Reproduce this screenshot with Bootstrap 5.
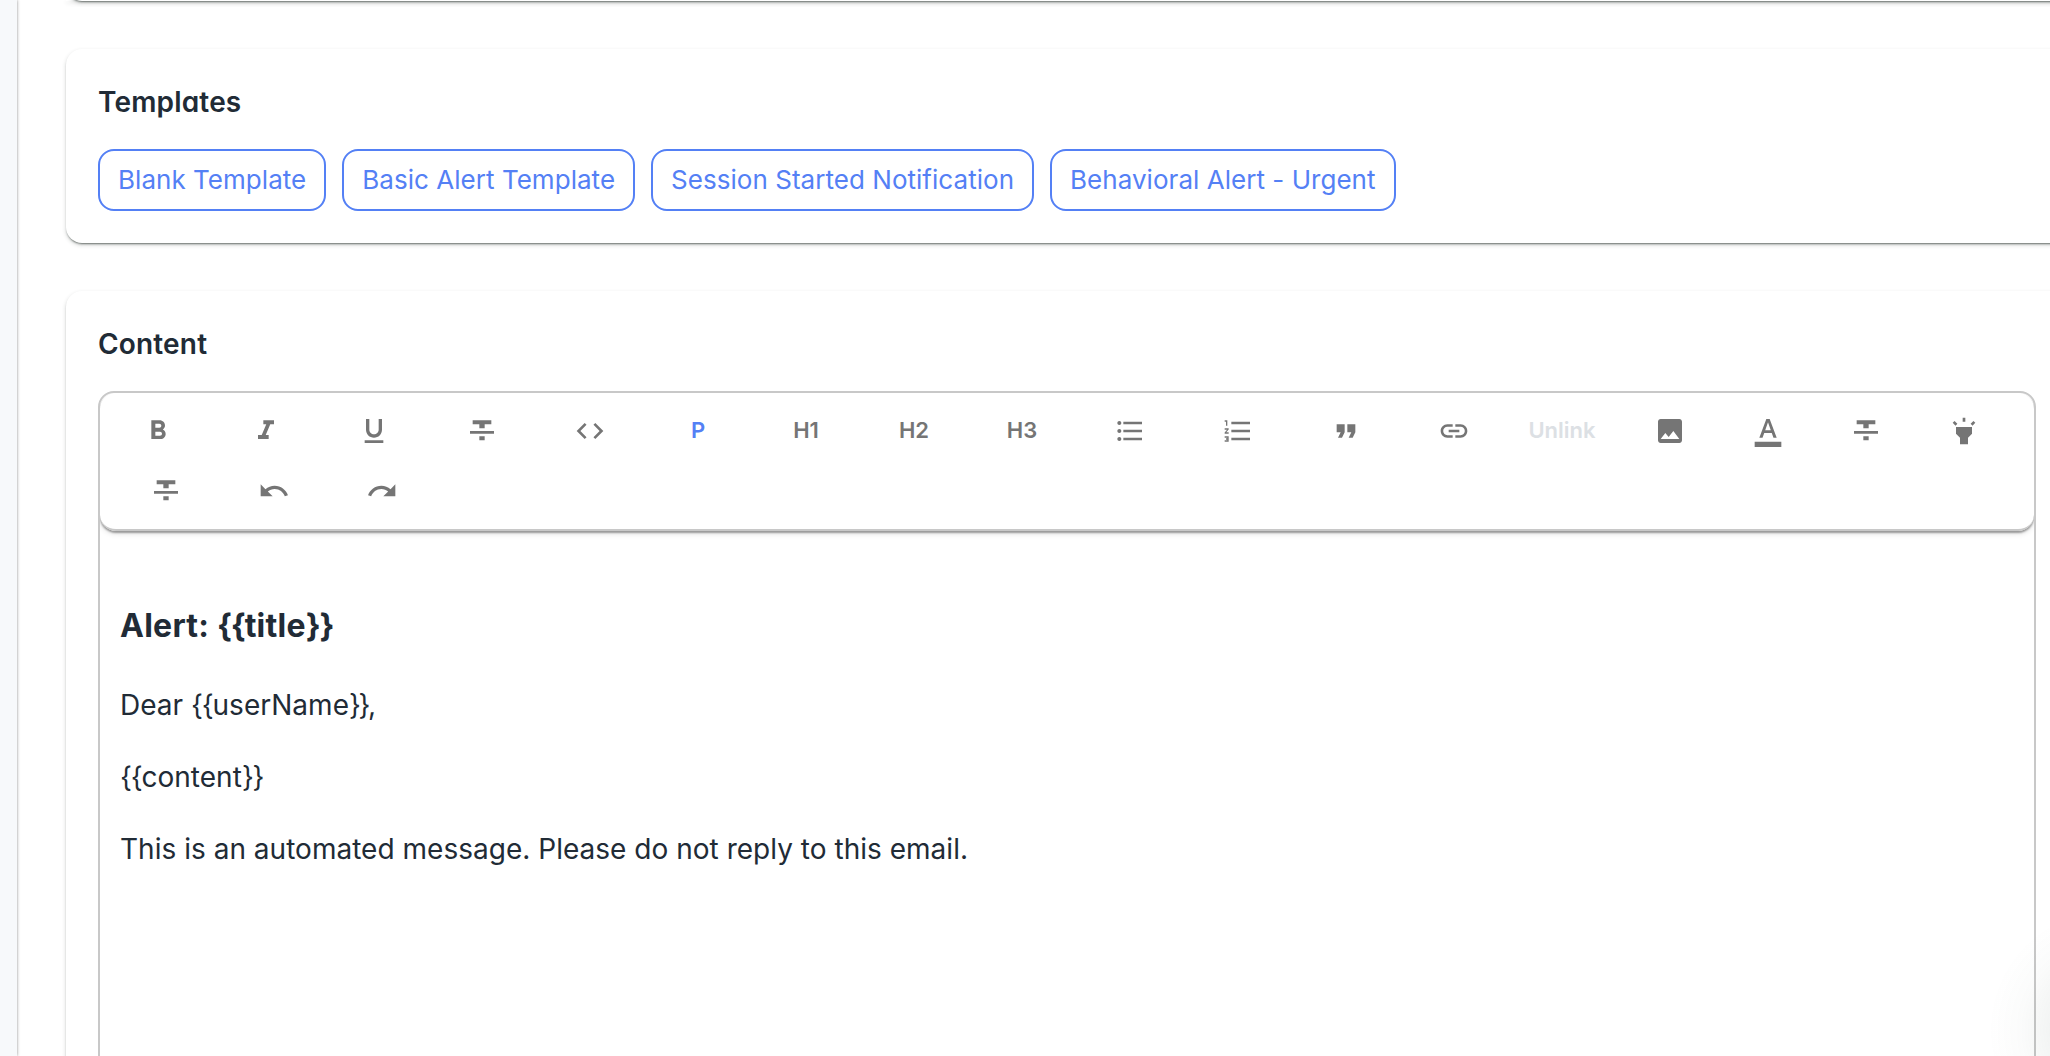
<!DOCTYPE html>
<html lang="en">
<head>
<meta charset="utf-8">
<title>Email template editor</title>
<link href="https://cdn.jsdelivr.net/npm/bootstrap@5.3.0/dist/css/bootstrap.min.css" rel="stylesheet">
<style>
html,body{height:100%;overflow:hidden}
body{font-family:Inter,"Liberation Sans",sans-serif;color:#212b36;background:#fff}
.side-rail{width:17px;background:#f7f9fb;flex:none;box-shadow:0 0 3px rgba(0,0,0,.45)}
.page-main{height:1056px;padding-left:49px;overflow:hidden;gap:48px}
.panel{width:2100px;border-radius:16px;background:#fff;padding:32px;flex:none;box-shadow:0 2px 2px -1px rgba(40,50,45,.62),0 2px 4px rgba(40,50,45,.2)}
.panel-prev{height:1px;padding:0}
.panel-prev::before{content:"";display:block;margin-top:-79px;height:80px;border-radius:16px;box-shadow:0 2px 2px -1px rgba(40,50,45,.62),0 2px 4px rgba(40,50,45,.2)}
.panel-title{font-size:28px;line-height:42px;font-weight:600;margin:0 0 26px;letter-spacing:.17px;font-feature-settings:"cv11"}
.tpl-btn{--bs-btn-color:#5480f5;--bs-btn-border-color:#5480f5;font-size:26px;line-height:40px;height:62px;padding:9px 18px;border-width:2px;border-radius:16px;letter-spacing:.035px}
.editor{width:1938px;height:900px;border:2px solid #c8c8c8;border-radius:16px;overflow:hidden}
.toolbar{height:138px;padding:7px 4px;border-bottom:2px solid #c8c8c8;border-radius:16px;box-shadow:0 2px 2px rgba(0,0,0,.34),0 2px 6px rgba(0,0,0,.14);color:#757575}
.tool{width:108px;height:60px;padding:0;border:0;background:none;color:inherit;font-size:22px;font-weight:600;flex:none}
.tool-slim{width:88px}
.tool-row-next{padding-left:8px}
.tool svg{width:32px;height:32px;fill:currentColor}
.tool-on{color:#5480f5}
.tool-off{color:#dce0e4}
.doc{padding:71px 20px 0;font-size:28px;line-height:42px;letter-spacing:.02px}
.doc h3{font-size:32px;line-height:48px;font-weight:700;margin:0 0 34px;letter-spacing:.25px}
.doc p{margin:0 0 30px}
.brace{letter-spacing:-1.2px}
.brace-tight{letter-spacing:-2.4px}
.corner-glow{position:fixed;right:0;bottom:0;width:80px;height:156px;pointer-events:none;background:radial-gradient(circle at 140px 130px,rgba(40,70,60,.16) 0,rgba(40,70,60,.055) 62px,rgba(40,70,60,.018) 90px,rgba(40,70,60,0) 122px)}
</style>
</head>
<body class="d-flex">
<svg class="d-none">
<symbol id="i-strike" viewBox="0 0 24 24"><path d="M10 19h4v-3h-4v3zM5 4v3h5v3h4V7h5V4H5zM3 14h18v-2H3v2z"/></symbol>
</svg>
<div class="side-rail"></div>
<main class="page-main d-flex flex-column">
<section class="panel panel-prev"></section>
<section class="panel">
<h2 class="panel-title">Templates</h2>
<div class="d-flex gap-3">
<button class="btn btn-outline-primary tpl-btn">Blank Template</button>
<button class="btn btn-outline-primary tpl-btn">Basic Alert Template</button>
<button class="btn btn-outline-primary tpl-btn">Session Started Notification</button>
<button class="btn btn-outline-primary tpl-btn">Behavioral Alert - Urgent</button>
</div>
</section>
<section class="panel">
<h2 class="panel-title">Content</h2>
<div class="editor">
<div class="toolbar">
<div class="d-flex">
<button class="tool" aria-label="Bold"><svg viewBox="0 0 24 24"><path d="M15.6 10.79c.97-.67 1.65-1.77 1.65-2.79 0-2.26-1.75-4-4-4H7v14h7.04c2.09 0 3.71-1.7 3.71-3.79 0-1.52-.86-2.82-2.15-3.42zM10 6.5h3c.83 0 1.5.67 1.5 1.5s-.67 1.5-1.5 1.5h-3v-3zm3.5 9H10v-3h3.5c.83 0 1.5.67 1.5 1.5s-.67 1.5-1.5 1.5z"/></svg></button>
<button class="tool" aria-label="Italic"><svg viewBox="0 0 24 24"><path d="M10 4v3h2.21l-3.42 8H6v3h8v-3h-2.21l3.42-8H18V4z"/></svg></button>
<button class="tool" aria-label="Underline"><svg viewBox="0 0 24 24"><path d="M12 17c3.31 0 6-2.69 6-6V3h-2.5v8c0 1.93-1.57 3.5-3.5 3.5S8.500 12.930 8.500 11V3H6v8c0 3.310 2.690 6 6 6zm-7 2v2h14v-2H5z"/></svg></button>
<button class="tool" aria-label="Strikethrough"><svg><use href="#i-strike"/></svg></button>
<button class="tool" aria-label="Code"><svg viewBox="0 0 24 24"><path d="M9.400 16.600 4.800 12l4.600-4.600L8 6l-6 6 6 6 1.400-1.400zm5.200 0 4.600-4.600-4.600-4.600L16 6l6 6-6 6-1.400-1.400z"/></svg></button>
<button class="tool tool-on">P</button>
<button class="tool">H1</button>
<button class="tool">H2</button>
<button class="tool">H3</button>
<button class="tool" aria-label="Bulleted list"><svg viewBox="0 0 24 24"><path d="M4 10.500c-.83 0-1.500.67-1.500 1.500s.67 1.500 1.500 1.500 1.500-.67 1.500-1.500-.67-1.500-1.500-1.500zm0-6c-.83 0-1.500.67-1.500 1.500S3.170 7.500 4 7.500 5.500 6.830 5.500 6 4.830 4.500 4 4.500zm0 12c-.83 0-1.500.68-1.500 1.500s.68 1.500 1.500 1.500 1.500-.68 1.500-1.500-.67-1.500-1.500-1.500zM7 19h14v-2H7v2zm0-6h14v-2H7v2zm0-8v2h14V5H7z"/></svg></button>
<button class="tool" aria-label="Numbered list"><svg viewBox="0 0 24 24"><path d="M2 17h2v.5H3v1h1v.5H2v1h3v-4H2v1zm1-9h1V4H2v1h1v3zm-1 3h1.800L2 13.100v.9h3v-1H3.200L5 10.900V10H2v1zm5-6v2h14V5H7zm0 14h14v-2H7v2zm0-6h14v-2H7v2z"/></svg></button>
<button class="tool" aria-label="Quote"><svg viewBox="0 0 24 24"><path d="M6 17h3l2-4V7H5v6h3zm8 0h3l2-4V7h-6v6h3z"/></svg></button>
<button class="tool" aria-label="Link"><svg viewBox="0 0 24 24"><path d="M3.900 12c0-1.710 1.390-3.100 3.100-3.100h4V7H7c-2.760 0-5 2.240-5 5s2.240 5 5 5h4v-1.900H7c-1.710 0-3.100-1.390-3.100-3.100zM8 13h8v-2H8v2zm9-6h-4v1.900h4c1.710 0 3.100 1.390 3.100 3.100s-1.390 3.100-3.100 3.100h-4V17h4c2.760 0 5-2.240 5-5s-2.240-5-5-5z"/></svg></button>
<button class="tool tool-off">Unlink</button>
<button class="tool" aria-label="Image"><svg viewBox="0 0 24 24"><path d="M21 19V5c0-1.100-.9-2-2-2H5c-1.100 0-2 .9-2 2v14c0 1.100.9 2 2 2h14c1.100 0 2-.9 2-2zM8.500 13.500l2.500 3.010L14.500 12l4.500 6H5l3.500-4.500z"/></svg></button>
<button class="tool tool-slim" aria-label="Text colour"><svg viewBox="0 0 24 24"><path d="M2 20h20v4H2v-4zm3.490-3h2.420l1.270-3.580h5.650L16.090 17h2.420L13.250 3h-2.500L5.490 17zm4.420-5.610 2.030-5.790h.12l2.030 5.790H9.910z"/></svg></button>
<button class="tool" aria-label="Clear colour"><svg><use href="#i-strike"/></svg></button>
<button class="tool tool-slim" aria-label="Highlight"><svg viewBox="0 0 24 24"><path d="m6 14 3 3v5h6v-5l3-3V9H6zm5-12h2v3h-2zM3.500 5.875 4.914 4.460l2.120 2.122L5.620 7.997zm13.460.71 2.123-2.120 1.414 1.414L18.375 8z"/></svg></button>
</div>
<div class="d-flex tool-row-next">
<button class="tool" aria-label="Clear highlight"><svg><use href="#i-strike"/></svg></button>
<button class="tool" aria-label="Undo"><svg viewBox="0 0 24 24"><path d="M12.500 8c-2.650 0-5.050.99-6.900 2.600L2 7v9h9l-3.620-3.620c1.390-1.160 3.160-1.880 5.120-1.880 3.540 0 6.550 2.310 7.600 5.500l2.370-.78C21.080 11.030 17.150 8 12.500 8z"/></svg></button>
<button class="tool" aria-label="Redo"><svg viewBox="0 0 24 24"><path d="M18.400 10.600C16.550 8.990 14.150 8 11.500 8c-4.650 0-8.580 3.030-9.960 7.220L3.900 16c1.050-3.190 4.050-5.500 7.600-5.500 1.950 0 3.730.72 5.120 1.880L13 16h9V7l-3.600 3.600z"/></svg></button>
</div>
</div>
<div class="doc">
<h3>Alert: <span class="brace">{{</span>title<span class="brace">}}</span></h3>
<p>Dear <span class="brace">{{</span>userName<span class="brace-tight">}}</span>,</p>
<p><span class="brace">{{</span>content<span class="brace">}}</span></p>
<p>This is an automated message. Please do not reply to this email.</p>
</div>
</div>
</section>
</main>
<div class="corner-glow"></div>
<script src="https://cdn.jsdelivr.net/npm/bootstrap@5.3.0/dist/js/bootstrap.bundle.min.js"></script>
</body>
</html>
